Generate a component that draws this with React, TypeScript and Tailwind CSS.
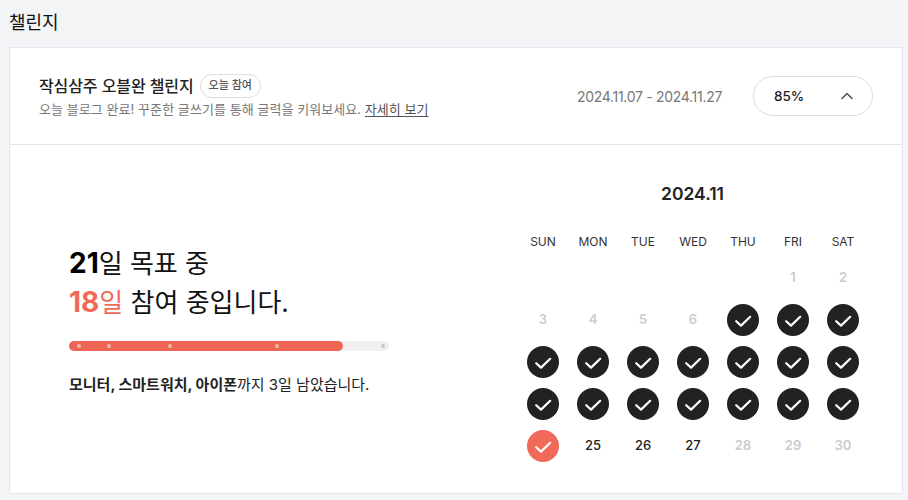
import { ChevronUp } from 'lucide-react'

const weekdays = ['SUN', 'MON', 'TUE', 'WED', 'THU', 'FRI', 'SAT']

type Day = { label?: string; kind: 'empty' | 'muted' | 'done' | 'today' | 'open' }

const days: Day[] = [
  ...Array.from({ length: 5 }, (): Day => ({ kind: 'empty' })),
  { label: '1', kind: 'muted' },
  { label: '2', kind: 'muted' },
  { label: '3', kind: 'muted' },
  { label: '4', kind: 'muted' },
  { label: '5', kind: 'muted' },
  { label: '6', kind: 'muted' },
  ...Array.from({ length: 17 }, (): Day => ({ kind: 'done' })),
  { kind: 'today' },
  { label: '25', kind: 'open' },
  { label: '26', kind: 'open' },
  { label: '27', kind: 'open' },
  { label: '28', kind: 'muted' },
  { label: '29', kind: 'muted' },
  { label: '30', kind: 'muted' },
]

const markers = [
  { left: 'left-[8px]', color: 'bg-[#f6b5aa]' },
  { left: 'left-[38px]', color: 'bg-[#f6b5aa]' },
  { left: 'left-[99px]', color: 'bg-[#f6b5aa]' },
  { left: 'left-[206px]', color: 'bg-[#f6b5aa]' },
  { left: 'left-[312px]', color: 'bg-[#c4c4c4]' },
]

function CheckCircle({ today }: { today?: boolean }) {
  return (
    <div className={`flex h-8 w-8 items-center justify-center rounded-full ${today ? 'bg-[#f16a59]' : 'bg-[#222222]'}`}>
      <svg width="18" height="18" viewBox="0 0 18 18" fill="none">
        <path d="M2.2 10.2L7 14.6L16.2 5.8" stroke="white" strokeWidth="2.2" strokeLinecap="round" strokeLinejoin="round" />
      </svg>
    </div>
  )
}

function DayCell({ day }: { day: Day }) {
  if (day.kind === 'empty') return <div className="h-8 w-8" />
  if (day.kind === 'done') return <CheckCircle />
  if (day.kind === 'today') return <CheckCircle today />
  return (
    <div
      className={`flex h-8 w-8 items-center justify-center text-[13px] ${
        day.kind === 'muted' ? 'font-semibold text-[#cccccc]' : 'font-medium text-[#222222]'
      }`}
    >
      {day.label}
    </div>
  )
}

export default function App() {
  return (
    <div className="h-[500px] w-[908px] overflow-hidden bg-[#f3f4f6] pl-[9px] pr-[5px] font-['Inter','Noto_Sans_CJK_KR',sans-serif] text-[#111111]">
      <h1 className="flex h-[47px] items-start pt-[9px] text-[18px] leading-[27px] font-normal">챌린지</h1>

      <div className="h-[447px] border border-[#e3e6ee] bg-white">
        {/* Header */}
        <div className="flex h-[97px] items-center justify-between border-b border-[#e3e6ee] px-[29px]">
          <div>
            <div className="flex items-center gap-[6px]">
              <span className="text-[16px] leading-6 font-medium tracking-[-0.1px] text-[#222222]">작심삼주 오블완 챌린지</span>
              <span className="flex h-6 items-center rounded-full border border-[#dddddd] px-2 text-[11px] font-medium text-[#555555]">
                오늘 참여
              </span>
            </div>
            <p className="mt-[1px] text-[13px] leading-5 tracking-[0.06px] text-[#777777]">
              오늘 블로그 완료! 꾸준한 글쓰기를 통해 글력을 키워보세요.{' '}
              <a className="text-[#555555] underline underline-offset-2">자세히 보기</a>
            </p>
          </div>
          <div className="flex items-center gap-[31px]">
            <span className="text-[14px] tracking-[-0.3px] text-[#777777]">2024.11.07 - 2024.11.27</span>
            <button className="flex h-10 w-[120px] items-center justify-between rounded-full border border-[#dddddd] pr-[15px] pl-5 text-[13.5px] font-medium text-[#222222]">
              85%
              <ChevronUp className="h-[20px] w-[20px] text-[#444444]" strokeWidth={1.5} />
            </button>
          </div>
        </div>

        {/* Body */}
        <div className="flex">
          <div className="w-[508px] pt-[99px] pl-[59px]">
            <h2 className="text-[26px] leading-[39px] font-normal text-[#111111]">
              <b className="text-[28px] font-bold text-black">21</b>일 목표 중
              <br />
              <span className="text-[#f16a59]">
                <b className="text-[28px] font-bold">18</b>일
              </span>{' '}
              참여 중입니다.
            </h2>
            <div className="relative mt-[19px] h-[10px] w-[320px] rounded-full bg-[#f0f0f0]">
              <div className="h-full w-[274px] rounded-full bg-[#ee6555]" />
              {markers.map((m) => (
                <span key={m.left} className={`absolute top-[3px] h-1 w-1 rounded-full ${m.left} ${m.color}`} />
              ))}
            </div>
            <p className="mt-[23px] text-[15px] leading-[22px] text-[#222222]">
              <b className="font-bold">모니터, 스마트워치, 아이폰</b>까지 3일 남았습니다.
            </p>
          </div>

          <div className="w-[350px]">
            <div className="pt-[36px] pr-[1px] text-center text-[17.5px] leading-[26px] font-semibold text-[#222222]">2024.11</div>
            <div className="mt-[25px] grid w-[350px] grid-cols-[repeat(7,50px)]">
              {weekdays.map((d) => (
                <div key={d} className="text-center text-[12px] leading-[20px] text-[#333333]">
                  {d}
                </div>
              ))}
            </div>
            <div className="mt-[10px] grid w-[350px] grid-cols-[repeat(7,50px)] justify-items-center gap-y-[10px]">
              {days.map((day, i) => (
                <DayCell key={i} day={day} />
              ))}
            </div>
          </div>
        </div>
      </div>
    </div>
  )
}
